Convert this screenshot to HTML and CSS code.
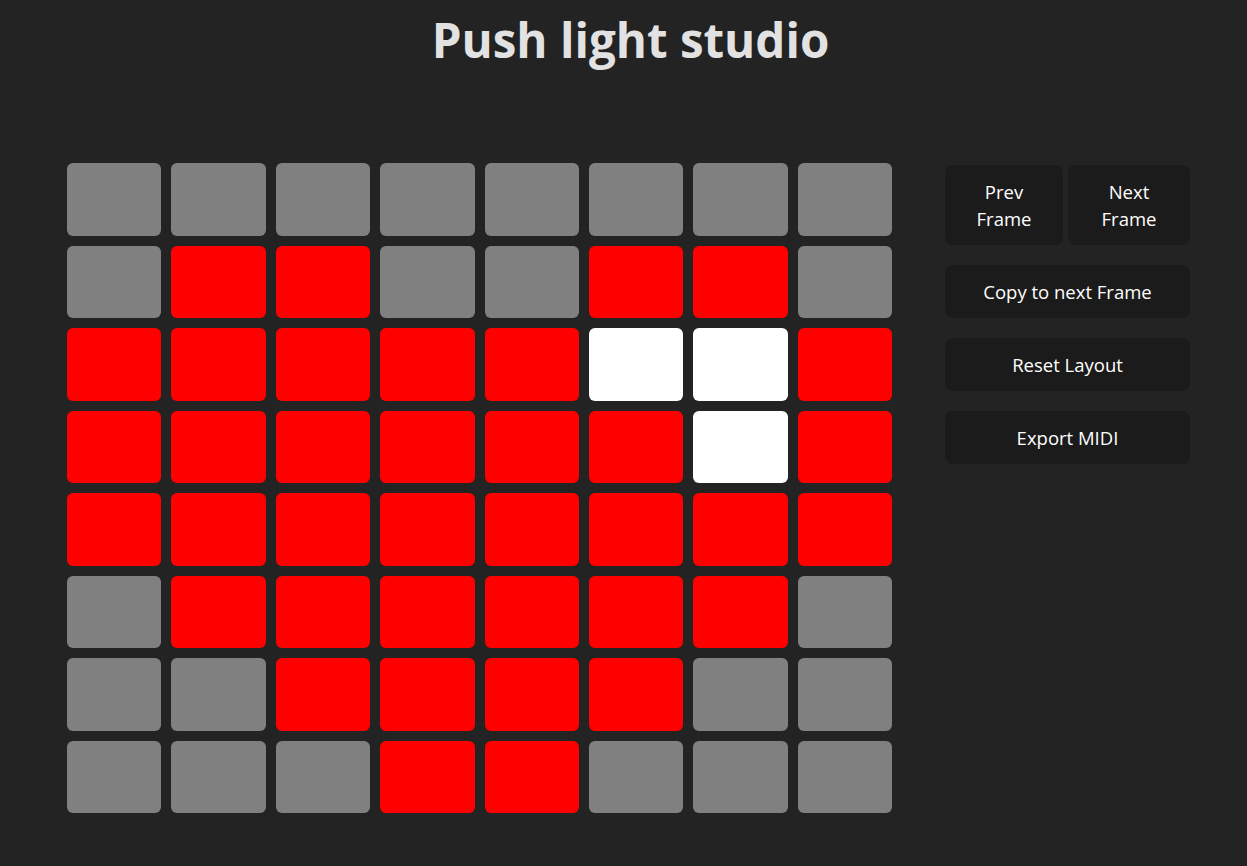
FILE: index.html
```html
<!DOCTYPE html>
<html lang="en">
<head>
<meta charset="utf-8">
<title>Push light studio</title>
<link rel="stylesheet" href="styles.css">
</head>
<body>
<h1 class="title">Push light studio</h1>
<main class="studio">
  <div class="pads">
    <div class="pad off"></div><div class="pad off"></div><div class="pad off"></div><div class="pad off"></div><div class="pad off"></div><div class="pad off"></div><div class="pad off"></div><div class="pad off"></div>
    <div class="pad off"></div><div class="pad red"></div><div class="pad red"></div><div class="pad off"></div><div class="pad off"></div><div class="pad red"></div><div class="pad red"></div><div class="pad off"></div>
    <div class="pad red"></div><div class="pad red"></div><div class="pad red"></div><div class="pad red"></div><div class="pad red"></div><div class="pad white"></div><div class="pad white"></div><div class="pad red"></div>
    <div class="pad red"></div><div class="pad red"></div><div class="pad red"></div><div class="pad red"></div><div class="pad red"></div><div class="pad red"></div><div class="pad white"></div><div class="pad red"></div>
    <div class="pad red"></div><div class="pad red"></div><div class="pad red"></div><div class="pad red"></div><div class="pad red"></div><div class="pad red"></div><div class="pad red"></div><div class="pad red"></div>
    <div class="pad off"></div><div class="pad red"></div><div class="pad red"></div><div class="pad red"></div><div class="pad red"></div><div class="pad red"></div><div class="pad red"></div><div class="pad off"></div>
    <div class="pad off"></div><div class="pad off"></div><div class="pad red"></div><div class="pad red"></div><div class="pad red"></div><div class="pad red"></div><div class="pad off"></div><div class="pad off"></div>
    <div class="pad off"></div><div class="pad off"></div><div class="pad off"></div><div class="pad red"></div><div class="pad red"></div><div class="pad off"></div><div class="pad off"></div><div class="pad off"></div>
  </div>
  <div class="controls">
    <div class="frame-nav">
      <button class="btn btn-prev">Prev<br>Frame</button>
      <button class="btn btn-next">Next<br>Frame</button>
    </div>
    <button class="btn">Copy to next Frame</button>
    <button class="btn">Reset Layout</button>
    <button class="btn">Export MIDI</button>
  </div>
</main>
</body>
</html>
```

FILE: styles.css
```css
* { box-sizing: border-box; }

body {
  margin: 0;
  background: #232323;
  color: #ffffff;
  font-family: "Open Sans", "Noto Sans", sans-serif;
}

.title {
  margin: 0;
  padding-top: 8px;
  padding-left: 14px;
  height: 163px;
  text-align: center;
  font-size: 47.5px;
  font-weight: 700;
  color: #e2e2e2;
  line-height: 64px;
}

.studio {
  display: flex;
  align-items: flex-start;
  padding-left: 67px;
  gap: 53px;
}

.pads {
  width: 825px;
  height: 650px;
  display: grid;
  grid-template-columns: repeat(8, 1fr);
  grid-template-rows: repeat(8, 1fr);
  gap: 10px;
}

.pad {
  border-radius: 6px;
}

.pad.off { background: #808080; }
.pad.red { background: #ff0000; }
.pad.white { background: #ffffff; }

.controls {
  width: 245px;
  margin-top: 2px;
  display: flex;
  flex-direction: column;
  gap: 20px;
}

.frame-nav {
  display: flex;
  gap: 5px;
}

.btn {
  border: none;
  border-radius: 8px;
  background: #1b1b1b;
  color: #ffffff;
  font-family: "Open Sans", "Noto Sans", sans-serif;
  font-size: 18.5px;
  line-height: 27px;
  padding: 13px 6px;
  text-align: center;
}

.btn-prev { width: 118px; }
.btn-next { flex: 1; }
```
